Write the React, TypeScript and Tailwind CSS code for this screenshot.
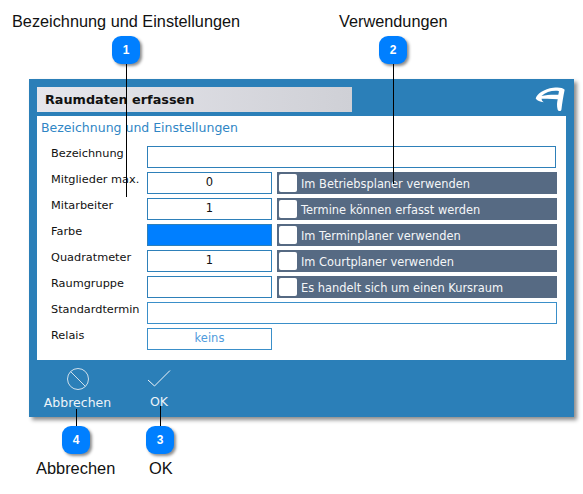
const font = "font-['DejaVu_Sans',sans-serif]";
const arial = "font-['Liberation_Sans',sans-serif]";

function Badge({ n, x, y }: { n: number; x: number; y: number }) {
  return (
    <div
      className={`absolute w-7 h-7 rounded-[9px] bg-[#007fff] text-white text-[12px] font-bold flex items-center justify-center shadow-[2px_2px_3px_rgba(0,0,0,0.45)] ${arial}`}
      style={{ left: x, top: y }}
    >
      {n}
    </div>
  );
}

function Line({ x, y, h }: { x: number; y: number; h: number }) {
  return <div className="absolute w-px bg-black" style={{ left: x, top: y, height: h }} />;
}

function Label({ text }: { text: string }) {
  return <div className="w-[96px] h-[22px] text-[11.3px] leading-[15px] text-[#111]">{text}</div>;
}

function Box({ children, filled }: { children?: React.ReactNode; filled?: boolean }) {
  return (
    <div
      className={`w-[125px] h-[22px] border border-[#2e80b9] flex items-center justify-center text-[11.5px] text-[#111] ${filled ? "bg-[#007fff]" : "bg-white"}`}
    >
      {children}
    </div>
  );
}

function Check({ text }: { text: string }) {
  return (
    <div className="w-[280px] h-[22px] bg-[#566a83] flex items-center pl-[2px] gap-[4px]">
      <div className="w-[18px] h-[18px] bg-white rounded-[2px]" />
      <span className="text-[11.42px] leading-[16px] pt-[1px] text-[#f4f6f8]">{text}</span>
    </div>
  );
}

const rows = [
  { label: "Mitglieder max.", value: "0", check: "Im Betriebsplaner verwenden" },
  { label: "Mitarbeiter", value: "1", check: "Termine können erfasst werden" },
  { label: "Farbe", filled: true, check: "Im Terminplaner verwenden" },
  { label: "Quadratmeter", value: "1", check: "Im Courtplaner verwenden" },
  { label: "Raumgruppe", check: "Es handelt sich um einen Kursraum" },
];

export default function App() {
  return (
    <div className={`relative w-[583px] h-[494px] bg-white overflow-hidden pt-[79px] pl-[29px] ${font}`}>
      <div className="w-[545px] h-[338px] bg-[#2b7fb8] shadow-[3px_3px_4px_rgba(0,0,0,0.45)] px-2 pt-2 flex flex-col">
        <div className="flex justify-between h-[25px] shrink-0">
          <div className="w-[315px] h-[25px] bg-gradient-to-r from-[#e6e6ec] to-[#cfd0d6] pl-2 flex items-center text-[12.8px] font-bold text-[#111]">
            Raumdaten erfassen
          </div>
          <svg width="30" height="25" viewBox="1 1.5 26 23.5" preserveAspectRatio="none" className="mr-[1px]">
            <path
              d="M16.7 2.3 C21 1.6 25 2 26.7 4 C25.6 10 24.6 16 23.9 22.6 C23.6 24.6 21.2 24.6 20.6 22.6 C19.8 19 20 16 20.7 13 C16 12.4 11 12.3 6.7 12.6 C6.8 14 7.4 15 8.6 15.9 C5.4 15.6 2.8 14.6 1.6 12.4 C2.6 8 9 3.4 16.7 2.3 Z M6.6 9.9 C11 9 16 8.6 21.2 8.9 L21.8 5.4 C17 4.4 10.4 6 6.6 9.9 Z"
              fill="#fff"
              fillRule="evenodd"
            />
          </svg>
        </div>
        <div className="mt-1 w-[529px] h-[244px] bg-white shrink-0 pl-[4px] pt-[4px]">
          <div className="text-[12.5px] leading-[16px] text-[#2f86c5] h-[26px]">Bezeichnung und Einstellungen</div>
          <div className="pl-[10px] flex flex-col gap-[4px]">
            <div className="flex">
              <Label text="Bezeichnung" />
              <div className="w-[409px] h-[22px] border border-[#2e80b9]" />
            </div>
            {rows.map((r) => (
              <div key={r.label} className="flex">
                <Label text={r.label} />
                <Box filled={r.filled}>{r.value}</Box>
                <div className="ml-[5px]">
                  <Check text={r.check} />
                </div>
              </div>
            ))}
            <div className="flex">
              <Label text="Standardtermin" />
              <div className="w-[410px] h-[22px] border border-[#3a8fc9]" />
            </div>
            <div className="flex">
              <Label text="Relais" />
              <div className="w-[125px] h-[22px] border border-[#3a8fc9] flex items-center justify-center text-[11.5px] text-[#4f9bdc]">
                keins
              </div>
            </div>
          </div>
        </div>
        <div className="flex pt-[7px] text-[#eef4f9] text-[12.5px]">
          <div className="w-[81px] flex flex-col items-center">
            <svg width="24" height="24" viewBox="0 0 24 24" fill="none" stroke="#cfe0ec" strokeWidth="1">
              <circle cx="12" cy="12" r="10.5" />
              <path d="M4.6 4.6 L19.4 19.4" />
            </svg>
            <span className="mt-[4px] leading-[16px]">Abbrechen</span>
          </div>
          <div className="ml-[21px] w-[40px] flex flex-col items-center">
            <svg width="24" height="24" viewBox="0 0 24 24" fill="none" stroke="#f2f6f9" strokeWidth="1">
              <path d="M1 13 L7.5 19 L23 3.5" />
            </svg>
            <span className="mt-[3px] leading-[16px]">OK</span>
          </div>
        </div>
      </div>

      <div className={`absolute left-[12px] top-[11px] text-[16.3px] leading-[20px] text-[#111] ${arial}`}>
        Bezeichnung und Einstellungen
      </div>
      <div className={`absolute left-[339px] top-[11px] text-[16.3px] leading-[20px] text-[#111] ${arial}`}>
        Verwendungen
      </div>
      <div className={`absolute left-[36px] top-[458px] text-[16.4px] leading-[20px] text-[#111] ${arial}`}>
        Abbrechen
      </div>
      <div className={`absolute left-[149px] top-[458px] text-[16.4px] leading-[20px] text-[#111] ${arial}`}>OK</div>

      <Line x={126} y={60} h={137} />
      <Line x={393} y={60} h={124} />
      <Line x={76} y={409} h={18} />
      <Line x={160} y={406} h={21} />
      <Badge n={1} x={112} y={36} />
      <Badge n={2} x={379} y={36} />
      <Badge n={4} x={62} y={426} />
      <Badge n={3} x={146} y={426} />
    </div>
  );
}
